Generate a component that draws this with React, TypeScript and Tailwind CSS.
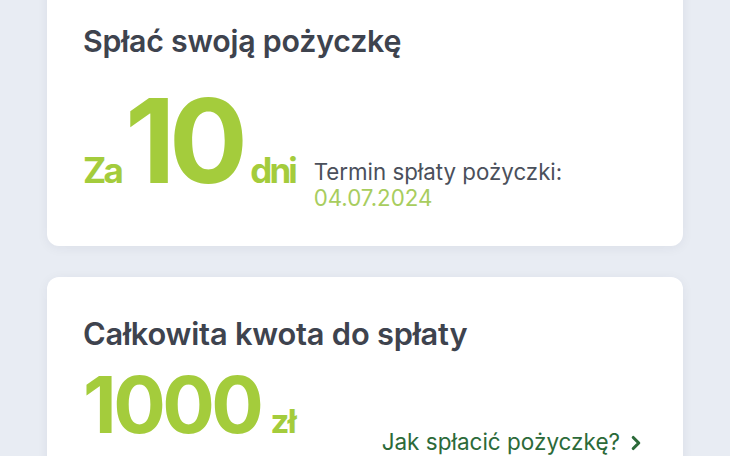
import { ChevronRight } from "lucide-react";

export default function App() {
    return (
        <main
            className="h-[456px] w-[730px] overflow-hidden bg-[#e8ecf3]"
            style={{ fontFamily: "Inter, 'Noto Sans', sans-serif" }}
        >
            <div className="mx-[47px] flex flex-col gap-[31px]">
                {/* TERMIN */}
                <section className="-mt-6 h-[270px] rounded-xl bg-white px-[36px] pt-[50px] shadow-[0_2px_12px_rgba(30,40,70,0.06)]">
                    <h2 className="text-[30.3px] font-semibold leading-none tracking-[-0.2px] text-[#3e434e]">
                        Spłać swoją pożyczkę
                    </h2>

                    <div className="mt-[35px] flex items-end">
                        <div className="flex items-baseline font-bold text-[#a4cc3c]">
                            <span className="text-[35px] leading-none tracking-[-2.8px]">Za</span>
                            <span className="ml-[4px] text-[117px] leading-[0.85] tracking-[-6.5px]">10</span>
                            <span className="ml-[9px] text-[35px] leading-none tracking-[-3px]">dni</span>
                        </div>
                        <div className="mb-[-20px] ml-[19px] text-[22.3px] leading-[26px]">
                            <p className="text-[#4b505b]">Termin spłaty pożyczki:</p>
                            <p className="text-[#a8cd5e]">04.07.2024</p>
                        </div>
                    </div>
                </section>

                {/* KWOTA */}
                <section className="h-[200px] rounded-xl bg-white px-[36px] pt-[42px] shadow-[0_2px_12px_rgba(30,40,70,0.06)]">
                    <h2 className="text-[30.8px] font-semibold leading-none tracking-[-0.2px] text-[#3e434e]">
                        Całkowita kwota do spłaty
                    </h2>

                    <div className="mt-[16px] flex items-end justify-between">
                        <div className="flex items-baseline font-bold text-[#a4cc3c]">
                            <span className="text-[78px] leading-none tracking-[-3.5px]">1000</span>
                            <span className="ml-[10px] text-[33px] leading-none tracking-[-1.5px]">zł</span>
                        </div>
                        <a className="mb-[-10px] flex items-center gap-[5px] text-[22.5px] leading-none text-[#2c6a39]">
                            Jak spłacić pożyczkę?
                            <ChevronRight size={22} strokeWidth={3.4} />
                        </a>
                    </div>
                </section>
            </div>
        </main>
    );
}
